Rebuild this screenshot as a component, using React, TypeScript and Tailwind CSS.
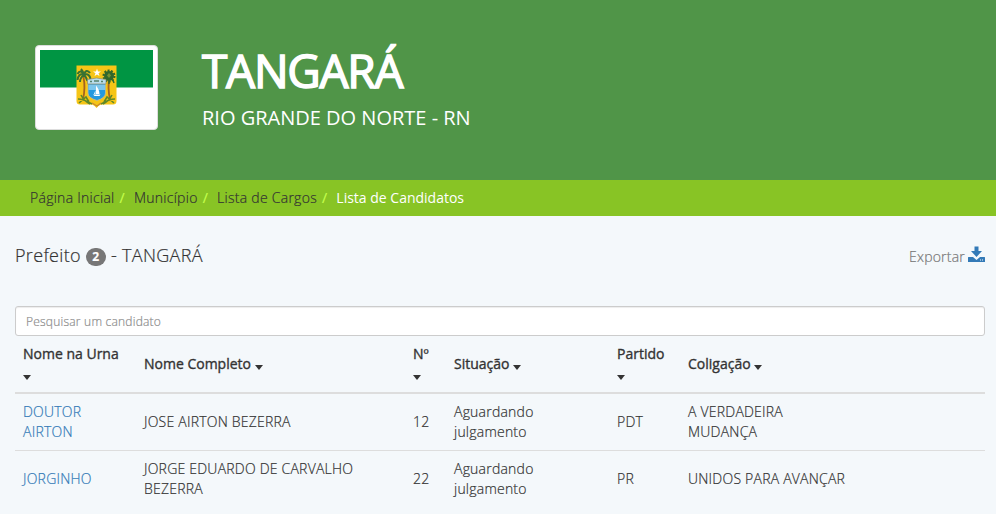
import React from 'react';

const columns = [
  { label: 'Nome na Urna', width: 'w-[121px]' },
  { label: 'Nome Completo', width: 'w-[269px]' },
  { label: 'Nº', width: 'w-[41px]' },
  { label: 'Situação', width: 'w-[163px]' },
  { label: 'Partido', width: 'w-[71px]' },
  { label: 'Coligação', width: 'w-[177px]' },
  { label: '', width: '' },
];

const candidates = [
  {
    name: 'DOUTOR AIRTON',
    fullName: 'JOSE AIRTON BEZERRA',
    number: 12,
    status: 'Aguardando julgamento',
    party: 'PDT',
    coalition: 'A VERDADEIRA MUDANÇA',
  },
  {
    name: 'JORGINHO',
    fullName: 'JORGE EDUARDO DE CARVALHO BEZERRA',
    number: 22,
    status: 'Aguardando julgamento',
    party: 'PR',
    coalition: 'UNIDOS PARA AVANÇAR',
  },
];

function Flag() {
  return (
    <svg className="block h-[75px] w-[113px]" viewBox="0 0 113 75">
      <path d="M0 0H113V75H0Z" fill="#fff" />
      <path d="M0 0H113V37.500H0Z" fill="#009543" />
      <path d="M36.500 15.500H76.500V51Q76.500 54.500 73 54.500H61Q58.500 55 56.500 58Q54.500 55 52 54.500H40Q36.500 54.500 36.500 51Z" fill="#f6c516" />
      <path d="M43.500 27C45 35 45 41 43 49M69.500 27C68 35 68 41 70 49" stroke="#a5641f" strokeWidth="1.800" fill="none" />
      <path
        d="M44 25C42 20 39 21 37.500 24M44 25C40 23 38 26 37.500 30M44 25C41 27 40 29 40 32M44 25C45 20 48 20 50 23M44 25C48 23 50 26 50.500 29M44 25C46 27 47 29 47.500 31M44 25C43 21 42 20 41 19"
        stroke="#397232"
        strokeWidth="2"
        fill="none"
      />
      <circle cx="69" cy="26" r="5" fill="#31672b" />
      <circle cx="69" cy="26" r="5.500" fill="none" stroke="#31672b" strokeWidth="2" strokeDasharray="2 1.400" />
      <path d="M65 30L64 33M69 31V34M73 30L74 33" stroke="#31672b" strokeWidth="1.400" />
      <path d="M67 25.500L69 23L71 25.500L69 28Z" fill="#759132" />
      <path
        d="M38 49C43 49 47 51 52 54M41 45C43 49 46 52 50 54M39 53L46 47L49 52M75 49C70 49 66 51 61 54M72 45C70 49 67 52 63 54M74 53L67 47L64 52"
        stroke="#608928"
        strokeWidth="1.600"
        fill="none"
      />
      <path d="M52 53L57 56L61 53" stroke="#c88830" strokeWidth="1.200" fill="none" />
      <path d="M48 33H65.500V43Q65.500 48 57 50.500Q48 48 48 43Z" fill="#2499df" stroke="#c6bb90" strokeWidth=".8" />
      <path d="M48.500 34.500H65V40H48.500Z" fill="#7cc6ec" />
      <path d="M47.500 29.500L56.500 28L66 29.500V34H47.500Z" fill="#b9deed" stroke="#938b66" strokeWidth=".7" />
      <path d="M50 31.500H52M54 31H59M61 31.500H63" stroke="#55826c" strokeWidth="1.400" />
      <path d="M56 35.500C58 38 59.500 41 59.500 44H56ZM55.500 40V44H54ZM53 44.500H60.500L59.500 46H54.500Z" fill="#fff" />
      <path d="M57 18.500L58 21.600H61L58.500 23.300L59.500 26L57 24.400L54.500 26L55.500 23.300L53 21.600H56Z" fill="#fff" />
    </svg>
  );
}

function DownloadIcon() {
  return (
    <svg className="h-4 w-[17px]" viewBox="0 0 17 16" fill="#337ab7">
      <path d="M6.500 .5H10.500V5H14L8.500 11L3 5H6.500Z" />
      <path fillRule="evenodd" d="M.5 11H5L8.500 14L12 11H16.500Q17 11 17 11.500V16H0V11.500Q0 11 .5 11ZM12 13.500V14.500H13V13.500ZM14 13.500V14.500H15V13.500Z" />
    </svg>
  );
}

export default function App() {
  return (
    <div className="h-[514px] w-[996px] overflow-hidden bg-[#f4f8fb] font-['Open_Sans',sans-serif] text-sm leading-5 font-light tracking-[0.22px] text-[#333] [-webkit-text-stroke:0.2px_currentColor]">
      <header className="flex h-[180px] bg-[#509548] pt-[45px] pl-[35px] text-white">
        <div className="h-[85px] w-[123px] rounded border border-[#ddd] bg-white p-1">
          <Flag />
        </div>
        <div className="ml-11">
          <h1 className="h-[52px] text-[46px] leading-[50px] font-normal tracking-[-1.25px] [-webkit-text-stroke:1.5px_white]">TANGARÁ</h1>
          <p className="mt-[7px] text-xl leading-7 font-normal tracking-normal [-webkit-text-stroke:0]">RIO GRANDE DO NORTE - RN</p>
        </div>
      </header>

      <nav className="flex h-9 items-center bg-[#88c425] pl-[30px] tracking-[0.27px]">
        <a href="#">Página Inicial</a>
        <span className="px-[5px] font-normal text-[#c5ff4d]">/</span>
        <a href="#" className="ml-1">Município</a>
        <span className="px-[5px] font-normal text-[#c5ff4d]">/</span>
        <a href="#" className="ml-1">Lista de Cargos</a>
        <span className="px-[5px] font-normal text-[#c5ff4d]">/</span>
        <span className="ml-1 font-normal tracking-normal text-white [-webkit-text-stroke:0]">Lista de Candidatos</span>
      </nav>

      <main className="px-[15px] pr-[11px]">
        <div className="flex h-[90px] items-start justify-between pt-[30px]">
          <h2 className="-mt-0.5 flex items-center text-lg leading-5 tracking-[0.32px]">
            Prefeito
            <span className="mx-[5px] mt-1 flex h-[18px] w-5 items-center justify-center rounded-full bg-[#777] text-xs font-bold text-white">2</span>
            - TANGARÁ
          </h2>
          <a href="#" className="flex text-[#777]">
            <span className="mt-px mr-[3px]">Exportar</span>
            <DownloadIcon />
          </a>
        </div>

        <input
          className="block h-[30px] w-[970px] rounded-[3px] border border-[#ccc] bg-white px-2.5 text-xs shadow-[inset_0_1px_1px_rgba(0,0,0,0.075)] placeholder:text-[#8c8c8c]"
          placeholder="Pesquisar um candidato"
        />

        <table className="w-[970px] table-fixed border-separate border-spacing-0 text-left">
          <thead>
            <tr>
              {columns.map((column) => (
                <th key={column.label} className={`${column.width} h-[58px] border-b-2 border-[#ddd] p-2 align-middle font-normal tracking-normal [-webkit-text-stroke:0.35px_#333]`}>
                  {column.label}{' '}
                  {column.label && (
                    <span className="relative top-0.5 inline-block border-x-4 border-t-[5px] border-x-transparent border-t-[#333] align-middle" />
                  )}
                </th>
              ))}
            </tr>
          </thead>
          <tbody className="[&_td]:border-b [&_td]:border-[#ddd] [&_td]:p-2 [&_tr:last-child_td]:border-0">
            {candidates.map((candidate) => (
              <tr key={candidate.number}>
                <td><a href="#" className="text-[#337ab7] [-webkit-text-stroke:0.2px_#337ab7]">{candidate.name}</a></td>
                <td>{candidate.fullName}</td>
                <td>{candidate.number}</td>
                <td><span className="block w-24">{candidate.status}</span></td>
                <td>{candidate.party}</td>
                <td>{candidate.coalition}</td>
                <td />
              </tr>
            ))}
          </tbody>
        </table>
      </main>
    </div>
  );
}
